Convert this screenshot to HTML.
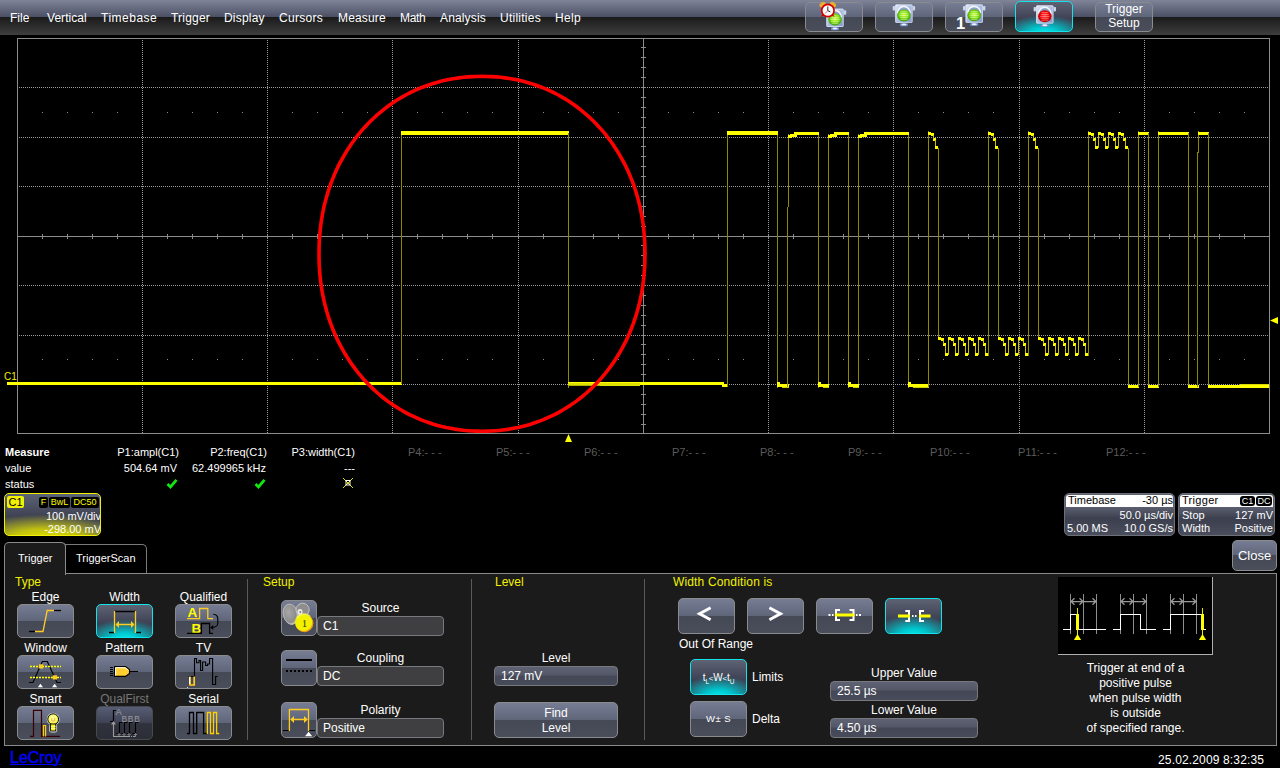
<!DOCTYPE html><html><head><meta charset="utf-8"><title>LeCroy</title>
<style>

html,body{margin:0;padding:0;background:#000;}
body{width:1280px;height:768px;overflow:hidden;position:relative;font-family:"Liberation Sans",sans-serif;font-size:12px;color:#fff;}
.a{position:absolute;white-space:nowrap;}
.t12{font-size:12px;line-height:14px;}
.t11{font-size:11px;line-height:13px;}
.c{text-align:center;}
.r{text-align:right;}
.y{color:#f2f200;}
.btn{position:absolute;box-sizing:border-box;border:1px solid #8a8b8e;border-radius:5px;
 background:linear-gradient(#767c92 0%,#60667a 49%,#454955 50%,#4a4e5b 100%);}
.btn.sel{border-color:#12e4ec;background:radial-gradient(ellipse 75% 62% at 50% 108%,#00f0f0 0%,#00c4cc 35%,rgba(0,170,180,0) 100%),linear-gradient(#5e6374 0%,#3c4052 60%,#3c4052 100%);}
.btn.dis{border-color:#48494d;background:linear-gradient(#575d74 0%,#3f4355 48%,#30323e 52%,#2b2d37 100%);}
.fld{position:absolute;box-sizing:border-box;border:1px solid #77797f;border-radius:4px;background:#3f3f41;font-size:12px;line-height:19px;padding-left:5px;color:#fff;}
.fld2{position:absolute;box-sizing:border-box;border:1px solid #77797f;border-radius:4px;background:linear-gradient(#5e6272 0%,#535767 45%,#444856 50%,#484c5a 100%);font-size:12px;line-height:19px;padding-left:6px;color:#fff;}
.sep{position:absolute;width:1px;background:#5a5a5a;}
svg{position:absolute;left:0;top:0;overflow:visible;}

</style></head><body>
<div class="a" style="left:0;top:0;width:1280px;height:17px;background:linear-gradient(#7f8498,#4b4f64);"></div>
<div class="a" style="left:0;top:17px;width:1280px;height:18px;background:linear-gradient(#1a1a1a,#3e3e3e);"></div>
<div class="a t12" style="left:10px;top:11px;letter-spacing:0px;">File</div>
<div class="a t12" style="left:47px;top:11px;letter-spacing:0.05px;">Vertical</div>
<div class="a t12" style="left:101px;top:11px;letter-spacing:0.5px;">Timebase</div>
<div class="a t12" style="left:171px;top:11px;letter-spacing:0.2px;">Trigger</div>
<div class="a t12" style="left:224px;top:11px;letter-spacing:0.2px;">Display</div>
<div class="a t12" style="left:279px;top:11px;letter-spacing:0.3px;">Cursors</div>
<div class="a t12" style="left:338px;top:11px;letter-spacing:0.15px;">Measure</div>
<div class="a t12" style="left:400px;top:11px;letter-spacing:-0.3px;">Math</div>
<div class="a t12" style="left:440px;top:11px;letter-spacing:0.15px;">Analysis</div>
<div class="a t12" style="left:500px;top:11px;letter-spacing:0.25px;">Utilities</div>
<div class="a t12" style="left:555px;top:11px;letter-spacing:0.3px;">Help</div>
<div class="btn" style="left:805px;top:2px;width:58px;height:30px;"></div>
<div class="btn" style="left:875px;top:2px;width:58px;height:30px;"></div>
<div class="btn" style="left:945px;top:2px;width:58px;height:30px;"></div>
<div class="btn sel" style="left:1015px;top:1px;width:58px;height:31px;"></div>
<div class="btn" style="left:1095px;top:2px;width:58px;height:30px;"></div>
<div class="a t12 c" style="left:1095px;top:2px;width:58px;line-height:14px;">Trigger<br>Setup</div>
<svg width="1280" height="768" viewBox="0 0 1280 768" shape-rendering="crispEdges">
<rect x="17.5" y="38.5" width="1252" height="395" fill="none" stroke="#8c8c8c" stroke-width="1"/>
<line x1="142.5" y1="40" x2="142.5" y2="433" stroke="#9a9a9a" stroke-width="1" stroke-dasharray="1 1"/>
<line x1="267.5" y1="40" x2="267.5" y2="433" stroke="#9a9a9a" stroke-width="1" stroke-dasharray="1 1"/>
<line x1="392.5" y1="40" x2="392.5" y2="433" stroke="#9a9a9a" stroke-width="1" stroke-dasharray="1 1"/>
<line x1="518.5" y1="40" x2="518.5" y2="433" stroke="#9a9a9a" stroke-width="1" stroke-dasharray="1 1"/>
<line x1="768.5" y1="40" x2="768.5" y2="433" stroke="#9a9a9a" stroke-width="1" stroke-dasharray="1 1"/>
<line x1="893.5" y1="40" x2="893.5" y2="433" stroke="#9a9a9a" stroke-width="1" stroke-dasharray="1 1"/>
<line x1="1019.5" y1="40" x2="1019.5" y2="433" stroke="#9a9a9a" stroke-width="1" stroke-dasharray="1 1"/>
<line x1="1144.5" y1="40" x2="1144.5" y2="433" stroke="#9a9a9a" stroke-width="1" stroke-dasharray="1 1"/>
<line x1="19" y1="87.5" x2="1269" y2="87.5" stroke="#9a9a9a" stroke-width="1" stroke-dasharray="1 1"/>
<line x1="19" y1="137.5" x2="1269" y2="137.5" stroke="#9a9a9a" stroke-width="1" stroke-dasharray="1 1"/>
<line x1="19" y1="186.5" x2="1269" y2="186.5" stroke="#9a9a9a" stroke-width="1" stroke-dasharray="1 1"/>
<line x1="19" y1="285.5" x2="1269" y2="285.5" stroke="#9a9a9a" stroke-width="1" stroke-dasharray="1 1"/>
<line x1="19" y1="335.5" x2="1269" y2="335.5" stroke="#9a9a9a" stroke-width="1" stroke-dasharray="1 1"/>
<line x1="19" y1="384.5" x2="1269" y2="384.5" stroke="#9a9a9a" stroke-width="1" stroke-dasharray="1 1"/>
<line x1="18" y1="236.5" x2="1269" y2="236.5" stroke="#8c8c8c"/>
<line x1="643.5" y1="39" x2="643.5" y2="433" stroke="#8c8c8c"/>
<rect x="42" y="234" width="1" height="5" fill="#8c8c8c"/>
<rect x="42" y="112" width="1" height="1" fill="#8a8a8a"/>
<rect x="42" y="359" width="1" height="1" fill="#8a8a8a"/>
<rect x="67" y="234" width="1" height="5" fill="#8c8c8c"/>
<rect x="67" y="112" width="1" height="1" fill="#8a8a8a"/>
<rect x="67" y="359" width="1" height="1" fill="#8a8a8a"/>
<rect x="92" y="234" width="1" height="5" fill="#8c8c8c"/>
<rect x="92" y="112" width="1" height="1" fill="#8a8a8a"/>
<rect x="92" y="359" width="1" height="1" fill="#8a8a8a"/>
<rect x="117" y="234" width="1" height="5" fill="#8c8c8c"/>
<rect x="117" y="112" width="1" height="1" fill="#8a8a8a"/>
<rect x="117" y="359" width="1" height="1" fill="#8a8a8a"/>
<rect x="142" y="234" width="1" height="5" fill="#8c8c8c"/>
<rect x="167" y="234" width="1" height="5" fill="#8c8c8c"/>
<rect x="167" y="112" width="1" height="1" fill="#8a8a8a"/>
<rect x="167" y="359" width="1" height="1" fill="#8a8a8a"/>
<rect x="192" y="234" width="1" height="5" fill="#8c8c8c"/>
<rect x="192" y="112" width="1" height="1" fill="#8a8a8a"/>
<rect x="192" y="359" width="1" height="1" fill="#8a8a8a"/>
<rect x="217" y="234" width="1" height="5" fill="#8c8c8c"/>
<rect x="217" y="112" width="1" height="1" fill="#8a8a8a"/>
<rect x="217" y="359" width="1" height="1" fill="#8a8a8a"/>
<rect x="242" y="234" width="1" height="5" fill="#8c8c8c"/>
<rect x="242" y="112" width="1" height="1" fill="#8a8a8a"/>
<rect x="242" y="359" width="1" height="1" fill="#8a8a8a"/>
<rect x="267" y="234" width="1" height="5" fill="#8c8c8c"/>
<rect x="292" y="234" width="1" height="5" fill="#8c8c8c"/>
<rect x="292" y="112" width="1" height="1" fill="#8a8a8a"/>
<rect x="292" y="359" width="1" height="1" fill="#8a8a8a"/>
<rect x="317" y="234" width="1" height="5" fill="#8c8c8c"/>
<rect x="317" y="112" width="1" height="1" fill="#8a8a8a"/>
<rect x="317" y="359" width="1" height="1" fill="#8a8a8a"/>
<rect x="342" y="234" width="1" height="5" fill="#8c8c8c"/>
<rect x="342" y="112" width="1" height="1" fill="#8a8a8a"/>
<rect x="342" y="359" width="1" height="1" fill="#8a8a8a"/>
<rect x="367" y="234" width="1" height="5" fill="#8c8c8c"/>
<rect x="367" y="112" width="1" height="1" fill="#8a8a8a"/>
<rect x="367" y="359" width="1" height="1" fill="#8a8a8a"/>
<rect x="392" y="234" width="1" height="5" fill="#8c8c8c"/>
<rect x="417" y="234" width="1" height="5" fill="#8c8c8c"/>
<rect x="417" y="112" width="1" height="1" fill="#8a8a8a"/>
<rect x="417" y="359" width="1" height="1" fill="#8a8a8a"/>
<rect x="442" y="234" width="1" height="5" fill="#8c8c8c"/>
<rect x="442" y="112" width="1" height="1" fill="#8a8a8a"/>
<rect x="442" y="359" width="1" height="1" fill="#8a8a8a"/>
<rect x="467" y="234" width="1" height="5" fill="#8c8c8c"/>
<rect x="467" y="112" width="1" height="1" fill="#8a8a8a"/>
<rect x="467" y="359" width="1" height="1" fill="#8a8a8a"/>
<rect x="492" y="234" width="1" height="5" fill="#8c8c8c"/>
<rect x="492" y="112" width="1" height="1" fill="#8a8a8a"/>
<rect x="492" y="359" width="1" height="1" fill="#8a8a8a"/>
<rect x="518" y="234" width="1" height="5" fill="#8c8c8c"/>
<rect x="543" y="234" width="1" height="5" fill="#8c8c8c"/>
<rect x="543" y="112" width="1" height="1" fill="#8a8a8a"/>
<rect x="543" y="359" width="1" height="1" fill="#8a8a8a"/>
<rect x="568" y="234" width="1" height="5" fill="#8c8c8c"/>
<rect x="568" y="112" width="1" height="1" fill="#8a8a8a"/>
<rect x="568" y="359" width="1" height="1" fill="#8a8a8a"/>
<rect x="593" y="234" width="1" height="5" fill="#8c8c8c"/>
<rect x="593" y="112" width="1" height="1" fill="#8a8a8a"/>
<rect x="593" y="359" width="1" height="1" fill="#8a8a8a"/>
<rect x="618" y="234" width="1" height="5" fill="#8c8c8c"/>
<rect x="618" y="112" width="1" height="1" fill="#8a8a8a"/>
<rect x="618" y="359" width="1" height="1" fill="#8a8a8a"/>
<rect x="643" y="234" width="1" height="5" fill="#8c8c8c"/>
<rect x="668" y="234" width="1" height="5" fill="#8c8c8c"/>
<rect x="668" y="112" width="1" height="1" fill="#8a8a8a"/>
<rect x="668" y="359" width="1" height="1" fill="#8a8a8a"/>
<rect x="693" y="234" width="1" height="5" fill="#8c8c8c"/>
<rect x="693" y="112" width="1" height="1" fill="#8a8a8a"/>
<rect x="693" y="359" width="1" height="1" fill="#8a8a8a"/>
<rect x="718" y="234" width="1" height="5" fill="#8c8c8c"/>
<rect x="718" y="112" width="1" height="1" fill="#8a8a8a"/>
<rect x="718" y="359" width="1" height="1" fill="#8a8a8a"/>
<rect x="743" y="234" width="1" height="5" fill="#8c8c8c"/>
<rect x="743" y="112" width="1" height="1" fill="#8a8a8a"/>
<rect x="743" y="359" width="1" height="1" fill="#8a8a8a"/>
<rect x="768" y="234" width="1" height="5" fill="#8c8c8c"/>
<rect x="793" y="234" width="1" height="5" fill="#8c8c8c"/>
<rect x="793" y="112" width="1" height="1" fill="#8a8a8a"/>
<rect x="793" y="359" width="1" height="1" fill="#8a8a8a"/>
<rect x="818" y="234" width="1" height="5" fill="#8c8c8c"/>
<rect x="818" y="112" width="1" height="1" fill="#8a8a8a"/>
<rect x="818" y="359" width="1" height="1" fill="#8a8a8a"/>
<rect x="843" y="234" width="1" height="5" fill="#8c8c8c"/>
<rect x="843" y="112" width="1" height="1" fill="#8a8a8a"/>
<rect x="843" y="359" width="1" height="1" fill="#8a8a8a"/>
<rect x="868" y="234" width="1" height="5" fill="#8c8c8c"/>
<rect x="868" y="112" width="1" height="1" fill="#8a8a8a"/>
<rect x="868" y="359" width="1" height="1" fill="#8a8a8a"/>
<rect x="893" y="234" width="1" height="5" fill="#8c8c8c"/>
<rect x="918" y="234" width="1" height="5" fill="#8c8c8c"/>
<rect x="918" y="112" width="1" height="1" fill="#8a8a8a"/>
<rect x="918" y="359" width="1" height="1" fill="#8a8a8a"/>
<rect x="943" y="234" width="1" height="5" fill="#8c8c8c"/>
<rect x="943" y="112" width="1" height="1" fill="#8a8a8a"/>
<rect x="943" y="359" width="1" height="1" fill="#8a8a8a"/>
<rect x="968" y="234" width="1" height="5" fill="#8c8c8c"/>
<rect x="968" y="112" width="1" height="1" fill="#8a8a8a"/>
<rect x="968" y="359" width="1" height="1" fill="#8a8a8a"/>
<rect x="993" y="234" width="1" height="5" fill="#8c8c8c"/>
<rect x="993" y="112" width="1" height="1" fill="#8a8a8a"/>
<rect x="993" y="359" width="1" height="1" fill="#8a8a8a"/>
<rect x="1019" y="234" width="1" height="5" fill="#8c8c8c"/>
<rect x="1044" y="234" width="1" height="5" fill="#8c8c8c"/>
<rect x="1044" y="112" width="1" height="1" fill="#8a8a8a"/>
<rect x="1044" y="359" width="1" height="1" fill="#8a8a8a"/>
<rect x="1069" y="234" width="1" height="5" fill="#8c8c8c"/>
<rect x="1069" y="112" width="1" height="1" fill="#8a8a8a"/>
<rect x="1069" y="359" width="1" height="1" fill="#8a8a8a"/>
<rect x="1094" y="234" width="1" height="5" fill="#8c8c8c"/>
<rect x="1094" y="112" width="1" height="1" fill="#8a8a8a"/>
<rect x="1094" y="359" width="1" height="1" fill="#8a8a8a"/>
<rect x="1119" y="234" width="1" height="5" fill="#8c8c8c"/>
<rect x="1119" y="112" width="1" height="1" fill="#8a8a8a"/>
<rect x="1119" y="359" width="1" height="1" fill="#8a8a8a"/>
<rect x="1144" y="234" width="1" height="5" fill="#8c8c8c"/>
<rect x="1169" y="234" width="1" height="5" fill="#8c8c8c"/>
<rect x="1169" y="112" width="1" height="1" fill="#8a8a8a"/>
<rect x="1169" y="359" width="1" height="1" fill="#8a8a8a"/>
<rect x="1194" y="234" width="1" height="5" fill="#8c8c8c"/>
<rect x="1194" y="112" width="1" height="1" fill="#8a8a8a"/>
<rect x="1194" y="359" width="1" height="1" fill="#8a8a8a"/>
<rect x="1219" y="234" width="1" height="5" fill="#8c8c8c"/>
<rect x="1219" y="112" width="1" height="1" fill="#8a8a8a"/>
<rect x="1219" y="359" width="1" height="1" fill="#8a8a8a"/>
<rect x="1244" y="234" width="1" height="5" fill="#8c8c8c"/>
<rect x="1244" y="112" width="1" height="1" fill="#8a8a8a"/>
<rect x="1244" y="359" width="1" height="1" fill="#8a8a8a"/>
<rect x="641" y="47" width="5" height="1" fill="#8c8c8c"/>
<rect x="641" y="57" width="5" height="1" fill="#8c8c8c"/>
<rect x="641" y="67" width="5" height="1" fill="#8c8c8c"/>
<rect x="641" y="77" width="5" height="1" fill="#8c8c8c"/>
<rect x="641" y="87" width="5" height="1" fill="#8c8c8c"/>
<rect x="641" y="97" width="5" height="1" fill="#8c8c8c"/>
<rect x="641" y="107" width="5" height="1" fill="#8c8c8c"/>
<rect x="641" y="117" width="5" height="1" fill="#8c8c8c"/>
<rect x="641" y="127" width="5" height="1" fill="#8c8c8c"/>
<rect x="641" y="137" width="5" height="1" fill="#8c8c8c"/>
<rect x="641" y="146" width="5" height="1" fill="#8c8c8c"/>
<rect x="641" y="156" width="5" height="1" fill="#8c8c8c"/>
<rect x="641" y="166" width="5" height="1" fill="#8c8c8c"/>
<rect x="641" y="176" width="5" height="1" fill="#8c8c8c"/>
<rect x="641" y="186" width="5" height="1" fill="#8c8c8c"/>
<rect x="641" y="196" width="5" height="1" fill="#8c8c8c"/>
<rect x="641" y="206" width="5" height="1" fill="#8c8c8c"/>
<rect x="641" y="216" width="5" height="1" fill="#8c8c8c"/>
<rect x="641" y="226" width="5" height="1" fill="#8c8c8c"/>
<rect x="641" y="236" width="5" height="1" fill="#8c8c8c"/>
<rect x="641" y="245" width="5" height="1" fill="#8c8c8c"/>
<rect x="641" y="255" width="5" height="1" fill="#8c8c8c"/>
<rect x="641" y="265" width="5" height="1" fill="#8c8c8c"/>
<rect x="641" y="275" width="5" height="1" fill="#8c8c8c"/>
<rect x="641" y="285" width="5" height="1" fill="#8c8c8c"/>
<rect x="641" y="295" width="5" height="1" fill="#8c8c8c"/>
<rect x="641" y="305" width="5" height="1" fill="#8c8c8c"/>
<rect x="641" y="315" width="5" height="1" fill="#8c8c8c"/>
<rect x="641" y="325" width="5" height="1" fill="#8c8c8c"/>
<rect x="641" y="335" width="5" height="1" fill="#8c8c8c"/>
<rect x="641" y="344" width="5" height="1" fill="#8c8c8c"/>
<rect x="641" y="354" width="5" height="1" fill="#8c8c8c"/>
<rect x="641" y="364" width="5" height="1" fill="#8c8c8c"/>
<rect x="641" y="374" width="5" height="1" fill="#8c8c8c"/>
<rect x="641" y="384" width="5" height="1" fill="#8c8c8c"/>
<rect x="641" y="394" width="5" height="1" fill="#8c8c8c"/>
<rect x="641" y="404" width="5" height="1" fill="#8c8c8c"/>
<rect x="641" y="414" width="5" height="1" fill="#8c8c8c"/>
<rect x="641" y="424" width="5" height="1" fill="#8c8c8c"/>
<rect x="7" y="382" width="395" height="3" fill="#ffff00"/>
<rect x="401" y="131" width="1" height="253" fill="#8f8800"/>
<rect x="401" y="131" width="168" height="4" fill="#ffff00"/>
<rect x="568" y="133" width="1" height="255" fill="#8f8800"/>
<rect x="568" y="382" width="156" height="3" fill="#ffff00"/>
<rect x="568" y="383" width="72" height="3" fill="#e0e000"/>
<rect x="568" y="385" width="32" height="1" fill="#b0b000"/>
<rect x="722" y="384" width="6" height="3" fill="#ffff00"/>
<rect x="727" y="131" width="1" height="256" fill="#8f8800"/>
<rect x="777" y="133" width="1" height="255" fill="#8f8800"/>
<rect x="727" y="131" width="51" height="4" fill="#ffff00"/>
<rect x="788" y="134" width="1" height="73" fill="#8f8800"/>
<rect x="818" y="133" width="1" height="255" fill="#8f8800"/>
<rect x="788" y="135" width="4" height="3" fill="#ffff00"/>
<rect x="790" y="134" width="7" height="3" fill="#ffff00"/>
<rect x="794" y="132" width="25" height="3" fill="#ffff00"/>
<rect x="828" y="134" width="1" height="253" fill="#8f8800"/>
<rect x="848" y="133" width="1" height="255" fill="#8f8800"/>
<rect x="828" y="135" width="4" height="3" fill="#ffff00"/>
<rect x="830" y="134" width="7" height="3" fill="#ffff00"/>
<rect x="834" y="132" width="15" height="3" fill="#ffff00"/>
<rect x="858" y="134" width="1" height="253" fill="#8f8800"/>
<rect x="908" y="133" width="1" height="255" fill="#8f8800"/>
<rect x="858" y="135" width="4" height="3" fill="#ffff00"/>
<rect x="860" y="134" width="7" height="3" fill="#ffff00"/>
<rect x="864" y="132" width="45" height="3" fill="#ffff00"/>
<rect x="777" y="384" width="12" height="3" fill="#ffff00"/>
<rect x="777" y="382" width="3" height="2" fill="#ffff00"/>
<rect x="782" y="387" width="7" height="1" fill="#d0d000"/>
<rect x="818" y="384" width="11" height="3" fill="#ffff00"/>
<rect x="818" y="382" width="3" height="2" fill="#ffff00"/>
<rect x="823" y="387" width="6" height="1" fill="#d0d000"/>
<rect x="848" y="384" width="11" height="3" fill="#ffff00"/>
<rect x="848" y="382" width="3" height="2" fill="#ffff00"/>
<rect x="853" y="387" width="6" height="1" fill="#d0d000"/>
<rect x="908" y="384" width="21" height="3" fill="#ffff00"/>
<rect x="908" y="382" width="3" height="2" fill="#ffff00"/>
<rect x="913" y="387" width="16" height="1" fill="#d0d000"/>
<rect x="787" y="207" width="1" height="180" fill="#8f8800"/>
<rect x="928" y="131" width="1" height="256" fill="#8f8800"/>
<rect x="928" y="132" width="3" height="3" fill="#ffff00"/>
<rect x="931" y="133" width="3" height="3" fill="#ffff00"/>
<rect x="933" y="138" width="3" height="3" fill="#ffff00"/>
<rect x="933" y="135" width="1" height="4" fill="#c8c000"/>
<rect x="935" y="140" width="1" height="7" fill="#c8c000"/>
<rect x="935" y="146" width="3" height="3" fill="#ffff00"/>
<rect x="938" y="148" width="1" height="190" fill="#8f8800"/>
<rect x="938" y="337" width="3" height="3" fill="#ffff00"/>
<rect x="941" y="338" width="3" height="3" fill="#ffff00"/>
<rect x="943" y="343" width="3" height="3" fill="#ffff00"/>
<rect x="943" y="340" width="1" height="4" fill="#c8c000"/>
<rect x="945" y="345" width="1" height="9" fill="#c8c000"/>
<rect x="945" y="353" width="3" height="3" fill="#ffff00"/>
<rect x="948" y="337" width="1" height="18" fill="#c8c000"/>
<rect x="948" y="337" width="3" height="3" fill="#ffff00"/>
<rect x="951" y="338" width="3" height="3" fill="#ffff00"/>
<rect x="953" y="343" width="3" height="3" fill="#ffff00"/>
<rect x="953" y="340" width="1" height="4" fill="#c8c000"/>
<rect x="955" y="345" width="1" height="9" fill="#c8c000"/>
<rect x="955" y="353" width="3" height="3" fill="#ffff00"/>
<rect x="958" y="337" width="1" height="18" fill="#c8c000"/>
<rect x="958" y="337" width="3" height="3" fill="#ffff00"/>
<rect x="961" y="338" width="3" height="3" fill="#ffff00"/>
<rect x="963" y="343" width="3" height="3" fill="#ffff00"/>
<rect x="963" y="340" width="1" height="4" fill="#c8c000"/>
<rect x="965" y="345" width="1" height="9" fill="#c8c000"/>
<rect x="965" y="353" width="3" height="3" fill="#ffff00"/>
<rect x="968" y="337" width="1" height="18" fill="#c8c000"/>
<rect x="968" y="337" width="3" height="3" fill="#ffff00"/>
<rect x="971" y="338" width="3" height="3" fill="#ffff00"/>
<rect x="973" y="343" width="3" height="3" fill="#ffff00"/>
<rect x="973" y="340" width="1" height="4" fill="#c8c000"/>
<rect x="975" y="345" width="1" height="9" fill="#c8c000"/>
<rect x="975" y="353" width="3" height="3" fill="#ffff00"/>
<rect x="978" y="337" width="1" height="18" fill="#c8c000"/>
<rect x="978" y="337" width="3" height="3" fill="#ffff00"/>
<rect x="981" y="338" width="3" height="3" fill="#ffff00"/>
<rect x="983" y="343" width="3" height="3" fill="#ffff00"/>
<rect x="983" y="340" width="1" height="4" fill="#c8c000"/>
<rect x="985" y="345" width="1" height="9" fill="#c8c000"/>
<rect x="985" y="353" width="3" height="3" fill="#ffff00"/>
<rect x="988" y="131" width="1" height="225" fill="#8f8800"/>
<rect x="988" y="132" width="3" height="3" fill="#ffff00"/>
<rect x="991" y="133" width="3" height="3" fill="#ffff00"/>
<rect x="993" y="138" width="3" height="3" fill="#ffff00"/>
<rect x="993" y="135" width="1" height="4" fill="#c8c000"/>
<rect x="995" y="140" width="1" height="7" fill="#c8c000"/>
<rect x="995" y="146" width="3" height="3" fill="#ffff00"/>
<rect x="998" y="148" width="1" height="190" fill="#8f8800"/>
<rect x="998" y="337" width="3" height="3" fill="#ffff00"/>
<rect x="1001" y="338" width="3" height="3" fill="#ffff00"/>
<rect x="1003" y="343" width="3" height="3" fill="#ffff00"/>
<rect x="1003" y="340" width="1" height="4" fill="#c8c000"/>
<rect x="1005" y="345" width="1" height="9" fill="#c8c000"/>
<rect x="1005" y="353" width="3" height="3" fill="#ffff00"/>
<rect x="1008" y="337" width="1" height="18" fill="#c8c000"/>
<rect x="1008" y="337" width="3" height="3" fill="#ffff00"/>
<rect x="1011" y="338" width="3" height="3" fill="#ffff00"/>
<rect x="1013" y="343" width="3" height="3" fill="#ffff00"/>
<rect x="1013" y="340" width="1" height="4" fill="#c8c000"/>
<rect x="1015" y="345" width="1" height="9" fill="#c8c000"/>
<rect x="1015" y="353" width="3" height="3" fill="#ffff00"/>
<rect x="1018" y="337" width="1" height="18" fill="#c8c000"/>
<rect x="1018" y="337" width="3" height="3" fill="#ffff00"/>
<rect x="1021" y="338" width="3" height="3" fill="#ffff00"/>
<rect x="1023" y="343" width="3" height="3" fill="#ffff00"/>
<rect x="1023" y="340" width="1" height="4" fill="#c8c000"/>
<rect x="1025" y="345" width="1" height="9" fill="#c8c000"/>
<rect x="1025" y="353" width="3" height="3" fill="#ffff00"/>
<rect x="1028" y="131" width="1" height="225" fill="#8f8800"/>
<rect x="1028" y="132" width="3" height="3" fill="#ffff00"/>
<rect x="1031" y="133" width="3" height="3" fill="#ffff00"/>
<rect x="1033" y="138" width="3" height="3" fill="#ffff00"/>
<rect x="1033" y="135" width="1" height="4" fill="#c8c000"/>
<rect x="1035" y="140" width="1" height="7" fill="#c8c000"/>
<rect x="1035" y="146" width="3" height="3" fill="#ffff00"/>
<rect x="1038" y="148" width="1" height="190" fill="#8f8800"/>
<rect x="1038" y="337" width="3" height="3" fill="#ffff00"/>
<rect x="1041" y="338" width="3" height="3" fill="#ffff00"/>
<rect x="1043" y="343" width="3" height="3" fill="#ffff00"/>
<rect x="1043" y="340" width="1" height="4" fill="#c8c000"/>
<rect x="1045" y="345" width="1" height="9" fill="#c8c000"/>
<rect x="1045" y="353" width="3" height="3" fill="#ffff00"/>
<rect x="1048" y="337" width="1" height="18" fill="#c8c000"/>
<rect x="1048" y="337" width="3" height="3" fill="#ffff00"/>
<rect x="1051" y="338" width="3" height="3" fill="#ffff00"/>
<rect x="1053" y="343" width="3" height="3" fill="#ffff00"/>
<rect x="1053" y="340" width="1" height="4" fill="#c8c000"/>
<rect x="1055" y="345" width="1" height="9" fill="#c8c000"/>
<rect x="1055" y="353" width="3" height="3" fill="#ffff00"/>
<rect x="1058" y="337" width="1" height="18" fill="#c8c000"/>
<rect x="1058" y="337" width="3" height="3" fill="#ffff00"/>
<rect x="1061" y="338" width="3" height="3" fill="#ffff00"/>
<rect x="1063" y="343" width="3" height="3" fill="#ffff00"/>
<rect x="1063" y="340" width="1" height="4" fill="#c8c000"/>
<rect x="1065" y="345" width="1" height="9" fill="#c8c000"/>
<rect x="1065" y="353" width="3" height="3" fill="#ffff00"/>
<rect x="1068" y="337" width="1" height="18" fill="#c8c000"/>
<rect x="1068" y="337" width="3" height="3" fill="#ffff00"/>
<rect x="1071" y="338" width="3" height="3" fill="#ffff00"/>
<rect x="1073" y="343" width="3" height="3" fill="#ffff00"/>
<rect x="1073" y="340" width="1" height="4" fill="#c8c000"/>
<rect x="1075" y="345" width="1" height="9" fill="#c8c000"/>
<rect x="1075" y="353" width="3" height="3" fill="#ffff00"/>
<rect x="1078" y="337" width="1" height="18" fill="#c8c000"/>
<rect x="1078" y="337" width="3" height="3" fill="#ffff00"/>
<rect x="1081" y="338" width="3" height="3" fill="#ffff00"/>
<rect x="1083" y="343" width="3" height="3" fill="#ffff00"/>
<rect x="1083" y="340" width="1" height="4" fill="#c8c000"/>
<rect x="1085" y="345" width="1" height="9" fill="#c8c000"/>
<rect x="1085" y="353" width="3" height="3" fill="#ffff00"/>
<rect x="1088" y="131" width="1" height="225" fill="#8f8800"/>
<rect x="1088" y="132" width="3" height="3" fill="#ffff00"/>
<rect x="1091" y="133" width="3" height="3" fill="#ffff00"/>
<rect x="1093" y="138" width="3" height="3" fill="#ffff00"/>
<rect x="1093" y="135" width="1" height="4" fill="#c8c000"/>
<rect x="1095" y="140" width="1" height="7" fill="#c8c000"/>
<rect x="1095" y="146" width="3" height="3" fill="#ffff00"/>
<rect x="1098" y="132" width="1" height="16" fill="#c8c000"/>
<rect x="1098" y="132" width="3" height="3" fill="#ffff00"/>
<rect x="1101" y="133" width="3" height="3" fill="#ffff00"/>
<rect x="1103" y="138" width="3" height="3" fill="#ffff00"/>
<rect x="1103" y="135" width="1" height="4" fill="#c8c000"/>
<rect x="1105" y="140" width="1" height="7" fill="#c8c000"/>
<rect x="1105" y="146" width="3" height="3" fill="#ffff00"/>
<rect x="1108" y="132" width="1" height="16" fill="#c8c000"/>
<rect x="1108" y="132" width="3" height="3" fill="#ffff00"/>
<rect x="1111" y="133" width="3" height="3" fill="#ffff00"/>
<rect x="1113" y="138" width="3" height="3" fill="#ffff00"/>
<rect x="1113" y="135" width="1" height="4" fill="#c8c000"/>
<rect x="1115" y="140" width="1" height="7" fill="#c8c000"/>
<rect x="1115" y="146" width="3" height="3" fill="#ffff00"/>
<rect x="1118" y="132" width="1" height="16" fill="#c8c000"/>
<rect x="1118" y="132" width="3" height="3" fill="#ffff00"/>
<rect x="1121" y="133" width="3" height="3" fill="#ffff00"/>
<rect x="1123" y="138" width="3" height="3" fill="#ffff00"/>
<rect x="1123" y="135" width="1" height="4" fill="#c8c000"/>
<rect x="1125" y="140" width="1" height="7" fill="#c8c000"/>
<rect x="1125" y="146" width="3" height="3" fill="#ffff00"/>
<rect x="1128" y="148" width="1" height="240" fill="#8f8800"/>
<rect x="1128" y="385" width="11" height="3" fill="#ffff00"/>
<rect x="1138" y="131" width="1" height="256" fill="#8f8800"/>
<rect x="1138" y="132" width="11" height="3" fill="#ffff00"/>
<rect x="1148" y="133" width="1" height="255" fill="#8f8800"/>
<rect x="1148" y="385" width="11" height="3" fill="#ffff00"/>
<rect x="1158" y="131" width="1" height="256" fill="#8f8800"/>
<rect x="1158" y="132" width="31" height="3" fill="#ffff00"/>
<rect x="1188" y="133" width="1" height="255" fill="#8f8800"/>
<rect x="1188" y="385" width="11" height="3" fill="#ffff00"/>
<rect x="1198" y="131" width="1" height="22" fill="#8f8800"/>
<rect x="1198" y="132" width="11" height="3" fill="#ffff00"/>
<rect x="1208" y="133" width="1" height="255" fill="#8f8800"/>
<rect x="1197" y="152" width="1" height="235" fill="#8f8800"/>
<rect x="1208" y="385" width="61" height="3" fill="#ffff00"/>
<rect x="1240" y="384" width="29" height="1" fill="#d8d800"/>
<polygon points="645.0,253.8 644.9,259.1 644.8,264.2 644.5,269.2 644.1,274.0 643.7,278.8 643.1,283.6 642.4,288.3 641.6,293.0 640.7,297.6 639.7,302.2 638.5,306.7 637.3,311.2 636.0,315.6 634.6,319.9 633.1,324.2 631.4,328.5 629.7,332.7 627.9,336.8 626.0,340.9 623.9,344.9 621.8,348.8 619.6,352.7 617.3,356.5 614.9,360.2 612.5,363.9 609.9,367.4 607.3,370.9 604.5,374.4 601.7,377.7 598.8,380.9 595.8,384.1 592.8,387.1 589.6,390.1 586.4,393.0 583.1,395.8 579.8,398.5 576.4,401.1 572.9,403.6 569.3,406.0 565.7,408.3 562.0,410.5 558.3,412.6 554.5,414.6 550.6,416.4 546.7,418.2 542.8,419.9 538.8,421.4 534.7,422.8 530.6,424.2 526.4,425.4 522.2,426.5 518.0,427.5 513.7,428.3 509.4,429.1 505.0,429.7 500.6,430.3 496.1,430.7 491.6,431.0 486.9,431.1 482.0,431.2 477.1,431.1 472.4,431.0 467.9,430.7 463.4,430.3 459.0,429.7 454.6,429.1 450.3,428.3 446.0,427.5 441.8,426.5 437.6,425.4 433.4,424.2 429.3,422.8 425.2,421.4 421.2,419.9 417.3,418.2 413.4,416.4 409.5,414.6 405.7,412.6 402.0,410.5 398.3,408.3 394.7,406.0 391.1,403.6 387.6,401.1 384.2,398.5 380.9,395.8 377.6,393.0 374.4,390.1 371.2,387.1 368.2,384.1 365.2,380.9 362.3,377.7 359.5,374.4 356.7,370.9 354.1,367.4 351.5,363.9 349.1,360.2 346.7,356.5 344.4,352.7 342.2,348.8 340.1,344.9 338.0,340.9 336.1,336.8 334.3,332.7 332.6,328.5 330.9,324.2 329.4,319.9 328.0,315.6 326.7,311.2 325.5,306.7 324.3,302.2 323.3,297.6 322.4,293.0 321.6,288.3 320.9,283.6 320.3,278.8 319.9,274.0 319.5,269.2 319.2,264.2 319.1,259.1 319.0,253.8 319.1,248.5 319.2,243.4 319.5,238.4 319.9,233.6 320.3,228.8 320.9,224.0 321.6,219.3 322.4,214.6 323.3,210.0 324.3,205.4 325.5,200.9 326.7,196.4 328.0,192.0 329.4,187.7 330.9,183.4 332.6,179.1 334.3,174.9 336.1,170.8 338.0,166.7 340.1,162.7 342.2,158.8 344.4,154.9 346.7,151.1 349.1,147.4 351.5,143.7 354.1,140.2 356.7,136.7 359.5,133.2 362.3,129.9 365.2,126.7 368.2,123.5 371.2,120.5 374.4,117.5 377.6,114.6 380.9,111.8 384.2,109.1 387.6,106.5 391.1,104.0 394.7,101.6 398.3,99.3 402.0,97.1 405.7,95.0 409.5,93.0 413.4,91.2 417.3,89.4 421.2,87.7 425.2,86.2 429.3,84.8 433.4,83.4 437.6,82.2 441.8,81.1 446.0,80.1 450.3,79.3 454.6,78.5 459.0,77.9 463.4,77.3 467.9,76.9 472.4,76.6 477.1,76.5 482.0,76.4 486.9,76.5 491.6,76.6 496.1,76.9 500.6,77.3 505.0,77.9 509.4,78.5 513.7,79.3 518.0,80.1 522.2,81.1 526.4,82.2 530.6,83.4 534.7,84.8 538.8,86.2 542.8,87.7 546.7,89.4 550.6,91.2 554.5,93.0 558.3,95.0 562.0,97.1 565.7,99.3 569.3,101.6 572.9,104.0 576.4,106.5 579.8,109.1 583.1,111.8 586.4,114.6 589.6,117.5 592.8,120.5 595.8,123.5 598.8,126.7 601.7,129.9 604.5,133.2 607.3,136.7 609.9,140.2 612.5,143.7 614.9,147.4 617.3,151.1 619.6,154.9 621.8,158.8 623.9,162.7 626.0,166.7 627.9,170.8 629.7,174.9 631.4,179.1 633.1,183.4 634.6,187.7 636.0,192.0 637.3,196.4 638.5,200.9 639.7,205.4 640.7,210.0 641.6,214.6 642.4,219.3 643.1,224.0 643.7,228.8 644.1,233.6 644.5,238.4 644.8,243.4 644.9,248.5" fill="none" stroke="#ff0000" stroke-width="3.6" stroke-linejoin="round" shape-rendering="auto"/>
<polygon points="565,442 572,442 568.5,434" fill="#ffff00" shape-rendering="auto"/>
<polygon points="1270,320.5 1278,317 1278,324" fill="#ffff00" shape-rendering="auto"/>
<text x="4" y="380" font-family='"Liberation Sans", sans-serif' font-size="10" fill="#f0f000" shape-rendering="auto">C1</text>
</svg>
<div class="a t11" style="left:5px;top:446px;font-weight:bold;">Measure</div>
<div class="a t11" style="left:5px;top:462px;">value</div>
<div class="a t11" style="left:5px;top:478px;">status</div>
<div class="a t11 r" style="left:80px;top:446px;width:99px;">P1:ampl(C1)</div>
<div class="a t11 r" style="left:80px;top:462px;width:97px;">504.64 mV</div>
<div class="a t11 r" style="left:170px;top:446px;width:97px;">P2:freq(C1)</div>
<div class="a t11 r" style="left:166px;top:462px;width:100px;">62.499965 kHz</div>
<div class="a t11 r" style="left:260px;top:446px;width:95px;">P3:width(C1)</div>
<div class="a t11 r" style="left:260px;top:462px;width:95px;">---</div>
<div class="a t11" style="left:408px;top:446px;color:#5c5c5c;">P4:- - -</div>
<div class="a t11" style="left:496px;top:446px;color:#5c5c5c;">P5:- - -</div>
<div class="a t11" style="left:584px;top:446px;color:#5c5c5c;">P6:- - -</div>
<div class="a t11" style="left:672px;top:446px;color:#5c5c5c;">P7:- - -</div>
<div class="a t11" style="left:760px;top:446px;color:#5c5c5c;">P8:- - -</div>
<div class="a t11" style="left:848px;top:446px;color:#5c5c5c;">P9:- - -</div>
<div class="a t11" style="left:930px;top:446px;color:#5c5c5c;">P10:- - -</div>
<div class="a t11" style="left:1018px;top:446px;color:#5c5c5c;">P11:- - -</div>
<div class="a t11" style="left:1106px;top:446px;color:#5c5c5c;">P12:- - -</div>
<svg width="1280" height="768" viewBox="0 0 1280 768"><path d="M167.5 484 L170.5 487 L176.5 479.8" stroke="#10e810" stroke-width="2.8" fill="none"/></svg>
<svg width="1280" height="768" viewBox="0 0 1280 768"><path d="M255.5 484 L258.5 487 L264.5 479.8" stroke="#10e810" stroke-width="2.8" fill="none"/></svg>
<svg width="1280" height="768" viewBox="0 0 1280 768"><g stroke-width="1" fill="none"><path d="M343 478 L353 488 M353 478 L343 488" stroke="#e4e400"/><rect x="346" y="480.5" width="4" height="4.5" stroke="#ffffff"/></g></svg>
<div class="a" style="left:4px;top:493px;width:97px;height:43px;box-sizing:border-box;border:1px solid #f0f000;border-radius:5px;overflow:hidden;background:radial-gradient(ellipse 90% 62% at 42% 112%,#e8e800 0%,#c2c210 42%,rgba(110,110,50,0) 100%),linear-gradient(#5c6276 0%,#3e4252 55%,#474b58 100%);"><div class="a" style="left:2px;top:2px;width:17px;height:12px;background:#f2f200;border-radius:2px;color:#000;font-size:11px;line-height:12px;text-align:center;">C1</div><div class="a" style="left:34px;top:3px;width:9px;height:11px;background:#000;border-radius:2px;color:#ffff00;font-size:9px;line-height:11px;text-align:center;">F</div><div class="a" style="left:44px;top:3px;width:21px;height:11px;background:#000;border-radius:2px;color:#ffff00;font-size:9px;line-height:11px;text-align:center;">BwL</div><div class="a" style="left:66px;top:3px;width:28px;height:11px;background:#000;border-radius:2px;color:#ffff00;font-size:9px;line-height:11px;text-align:center;">DC50</div><div class="a t11 r" style="left:0;top:16px;width:96px;">100 mV/div</div><div class="a t11 r" style="left:0;top:29px;width:96px;">-298.00 mV</div></div>
<div class="a" style="left:1064px;top:493px;width:111px;height:43px;box-sizing:border-box;border:1px solid #6e7078;border-radius:5px;overflow:hidden;background:linear-gradient(#5a5e6e 0%,#5a5e6e 32%,#3c404e 60%,#4a4e5c 100%);"><div class="a" style="left:1px;top:1px;width:107px;height:12px;background:#fff;border-radius:3px 3px 0 0;"></div><div class="a t11" style="left:3px;top:0px;color:#000;">Timebase</div><div class="a t11 r" style="left:0;top:0px;width:108px;color:#000;">-30 µs</div><div class="a t11 r" style="left:0;top:15px;width:108px;">50.0 µs/div</div><div class="a t11" style="left:2px;top:28px;">5.00 MS</div><div class="a t11 r" style="left:0;top:28px;width:108px;">10.0 GS/s</div></div>
<div class="a" style="left:1178px;top:493px;width:97px;height:43px;box-sizing:border-box;border:1px solid #6e7078;border-radius:5px;overflow:hidden;background:linear-gradient(#5a5e6e 0%,#5a5e6e 32%,#3c404e 60%,#4a4e5c 100%);"><div class="a" style="left:1px;top:1px;width:93px;height:12px;background:#fff;border-radius:3px 3px 0 0;"></div><div class="a t11" style="left:3px;top:0px;color:#000;letter-spacing:0.3px;">Trigger</div><div class="a" style="left:61px;top:2px;width:15px;height:10px;background:#000;border-radius:3px;color:#fff;font-size:9px;line-height:10px;text-align:center;">C1</div><div class="a" style="left:77px;top:2px;width:16px;height:10px;background:#000;border-radius:3px;color:#fff;font-size:9px;line-height:10px;text-align:center;">DC</div><div class="a t11" style="left:3px;top:15px;">Stop</div><div class="a t11 r" style="left:0;top:15px;width:94px;">127 mV</div><div class="a t11" style="left:3px;top:28px;">Width</div><div class="a t11 r" style="left:0;top:28px;width:94px;">Positive</div></div>
<div class="btn" style="left:1232px;top:540px;width:45px;height:31px;"></div>
<div class="a t12 c" style="left:1232px;top:549px;width:45px;font-size:13px;">Close</div>
<div class="a" style="left:4px;top:573px;width:1273px;height:173px;box-sizing:border-box;border:1px solid #8a8a8a;background:#1b1b1b;"></div>
<div class="a" style="left:65px;top:544px;width:82px;height:29px;box-sizing:border-box;border:1px solid #7a7a7a;border-bottom:none;border-radius:0 5px 0 0;background:#000;"></div>
<div class="a" style="left:4px;top:542px;width:62px;height:33px;box-sizing:border-box;border:1px solid #8a8a8a;border-bottom:none;border-radius:5px 5px 0 0;background:#1b1b1b;"></div>
<div class="a t11" style="left:18px;top:552px;">Trigger</div>
<div class="a t11" style="left:76px;top:552px;">TriggerScan</div>
<div class="a t12 y" style="left:15px;top:575px;">Type</div>
<div class="a t12 y" style="left:263px;top:575px;">Setup</div>
<div class="a t12 y" style="left:495px;top:575px;">Level</div>
<div class="a t12 y" style="left:673px;top:575px;letter-spacing:0.15px;">Width Condition is</div>
<div class="sep" style="left:247px;top:579px;height:161px;"></div>
<div class="sep" style="left:471px;top:579px;height:161px;"></div>
<div class="sep" style="left:644px;top:579px;height:161px;"></div>
<div class="btn " style="left:17px;top:604px;width:57px;height:34px;"></div>
<div class="a t12 c" style="left:7px;top:590px;width:77px;color:#fff;">Edge</div>
<div class="btn sel" style="left:96px;top:604px;width:57px;height:34px;"></div>
<div class="a t12 c" style="left:86px;top:590px;width:77px;color:#fff;">Width</div>
<div class="btn " style="left:175px;top:604px;width:57px;height:34px;"></div>
<div class="a t12 c" style="left:165px;top:590px;width:77px;color:#fff;">Qualified</div>
<div class="btn " style="left:17px;top:655px;width:57px;height:34px;"></div>
<div class="a t12 c" style="left:7px;top:641px;width:77px;color:#fff;">Window</div>
<div class="btn " style="left:96px;top:655px;width:57px;height:34px;"></div>
<div class="a t12 c" style="left:86px;top:641px;width:77px;color:#fff;">Pattern</div>
<div class="btn " style="left:175px;top:655px;width:57px;height:34px;"></div>
<div class="a t12 c" style="left:165px;top:641px;width:77px;color:#fff;">TV</div>
<div class="btn " style="left:17px;top:706px;width:57px;height:34px;"></div>
<div class="a t12 c" style="left:7px;top:692px;width:77px;color:#fff;">Smart</div>
<div class="btn dis" style="left:96px;top:706px;width:57px;height:34px;"></div>
<div class="a t12 c" style="left:86px;top:692px;width:77px;color:#777;">QualFirst</div>
<div class="btn " style="left:175px;top:706px;width:57px;height:34px;"></div>
<div class="a t12 c" style="left:165px;top:692px;width:77px;color:#fff;">Serial</div>
<!--ICONS-->
<div class="btn" style="left:281px;top:600px;width:36px;height:36px;"></div>
<div class="fld" style="left:317px;top:616px;width:127px;height:20px;">C1</div>
<div class="a t12 c" style="left:317px;top:601px;width:127px;">Source</div>
<div class="btn" style="left:281px;top:650px;width:36px;height:36px;"></div>
<div class="fld" style="left:317px;top:666px;width:127px;height:20px;">DC</div>
<div class="a t12 c" style="left:317px;top:651px;width:127px;">Coupling</div>
<div class="btn" style="left:281px;top:702px;width:36px;height:36px;"></div>
<div class="fld" style="left:317px;top:718px;width:127px;height:20px;">Positive</div>
<div class="a t12 c" style="left:317px;top:703px;width:127px;">Polarity</div>
<div class="a t12 c" style="left:494px;top:651px;width:124px;">Level</div>
<div class="fld2" style="left:494px;top:666px;width:124px;height:20px;">127 mV</div>
<div class="btn" style="left:494px;top:702px;width:124px;height:36px;"></div>
<div class="a t12 c" style="left:494px;top:706px;width:124px;line-height:15px;">Find<br>Level</div>
<div class="btn " style="left:678px;top:598px;width:57px;height:36px;"></div>
<div class="btn " style="left:747px;top:598px;width:57px;height:36px;"></div>
<div class="btn " style="left:816px;top:598px;width:57px;height:36px;"></div>
<div class="btn sel" style="left:885px;top:598px;width:57px;height:36px;"></div>
<div class="a t12" style="left:679px;top:637px;">Out Of Range</div>
<div class="btn sel" style="left:690px;top:659px;width:57px;height:36px;"></div>
<div class="btn" style="left:690px;top:701px;width:57px;height:36px;"></div>
<div class="a c" style="left:690px;top:671px;width:57px;font-size:10px;line-height:13px;letter-spacing:-0.2px;">t<span style="font-size:6.5px;vertical-align:-2.5px;">L</span><span style="font-size:8px;">&lt;</span>W<span style="font-size:8px;">&lt;</span>t<span style="font-size:6.5px;vertical-align:-2.5px;">U</span></div>
<div class="a c" style="left:690px;top:712px;width:57px;font-size:9.5px;line-height:13px;letter-spacing:0.4px;">W± S</div>
<div class="a t12" style="left:752px;top:670px;">Limits</div>
<div class="a t12" style="left:752px;top:712px;">Delta</div>
<div class="a t12 c" style="left:830px;top:666px;width:148px;">Upper Value</div>
<div class="fld2" style="left:830px;top:681px;width:148px;height:20px;">25.5 µs</div>
<div class="a t12 c" style="left:830px;top:703px;width:148px;">Lower Value</div>
<div class="fld2" style="left:830px;top:718px;width:148px;height:20px;">4.50 µs</div>
<div class="a" style="left:1058px;top:577px;width:155px;height:78px;box-sizing:border-box;background:#000;border-right:1px solid #b0b0b0;border-bottom:1px solid #b0b0b0;"></div>
<div class="a t12 c" style="left:1058px;top:661px;width:155px;line-height:15px;">Trigger at end of a<br>positive pulse<br>when pulse width<br>is outside<br>of specified range.</div>
<svg width="1280" height="768" viewBox="0 0 1280 768">
<defs><linearGradient id="tl" x1="0" y1="0" x2="1" y2="1"><stop offset="0" stop-color="#dfe8f8"/><stop offset="0.5" stop-color="#a9bce0"/><stop offset="1" stop-color="#7d95c6"/></linearGradient><radialGradient id="gr" cx="0.5" cy="0.45" r="0.55"><stop offset="0" stop-color="#d6ff50"/><stop offset="0.6" stop-color="#7fdc10"/><stop offset="1" stop-color="#3c9a00"/></radialGradient><radialGradient id="rd" cx="0.5" cy="0.45" r="0.55"><stop offset="0" stop-color="#ff4848"/><stop offset="0.6" stop-color="#f40000"/><stop offset="1" stop-color="#b00000"/></radialGradient><radialGradient id="disc" cx="0.4" cy="0.4" r="0.6"><stop offset="0" stop-color="#a8a8a8"/><stop offset="0.8" stop-color="#8c8c8c"/><stop offset="1" stop-color="#c8c8c8"/></radialGradient><radialGradient id="bulb" cx="0.45" cy="0.4" r="0.6"><stop offset="0" stop-color="#ffffb0"/><stop offset="1" stop-color="#f4f430"/></radialGradient></defs>
<rect x="823.8" y="10.2" width="2.4" height="4.5" rx="0.8" fill="#c9d6ee"/><rect x="843.8" y="10.2" width="2.4" height="4.5" rx="0.8" fill="#c9d6ee"/>
<rect x="826.4" y="8.7" width="17.2" height="18.2" rx="0.8" fill="url(#tl)"/>
<rect x="826.8" y="9.1" width="16.4" height="17.4" rx="0.6" fill="none" stroke="#eef3fc" stroke-width="0.8" opacity="0.8"/>
<path d="M828.7 17.2 A6.3 6.6 0 0 1 841.3 17.2" fill="#8ea0c4" stroke="#f4f7fd" stroke-width="1.5"/>
<ellipse cx="835" cy="19.5" rx="6.7" ry="6" fill="url(#gr)"/>
<rect x="831.6" y="15.499999999999996" width="6.799999999999999" height="0.7" fill="#ffffff" opacity="0.5"/>
<rect x="831.0" y="17.4" width="7.999999999999999" height="0.7" fill="#ffffff" opacity="0.5"/>
<rect x="830.4" y="19.299999999999997" width="9.2" height="0.7" fill="#ffffff" opacity="0.5"/>
<rect x="831.0" y="21.199999999999996" width="7.999999999999999" height="0.7" fill="#ffffff" opacity="0.5"/>
<rect x="831.6" y="23.099999999999998" width="6.799999999999999" height="0.7" fill="#ffffff" opacity="0.5"/>
<rect x="831" y="27.3" width="8" height="3" rx="0.8" fill="#6f8ec8"/>
<ellipse cx="835" cy="28.5" rx="2.6" ry="1" fill="#eef2fb"/>
<rect x="892.6999999999999" y="6.1" width="2.4" height="4.5" rx="0.8" fill="#c9d6ee"/><rect x="912.6999999999999" y="6.1" width="2.4" height="4.5" rx="0.8" fill="#c9d6ee"/>
<rect x="895.3" y="4.6" width="17.2" height="18.2" rx="0.8" fill="url(#tl)"/>
<rect x="895.6999999999999" y="5.0" width="16.4" height="17.4" rx="0.6" fill="none" stroke="#eef3fc" stroke-width="0.8" opacity="0.8"/>
<path d="M897.6 13.1 A6.3 6.6 0 0 1 910.1999999999999 13.1" fill="#8ea0c4" stroke="#f4f7fd" stroke-width="1.5"/>
<ellipse cx="903.9" cy="15.4" rx="6.7" ry="6" fill="url(#gr)"/>
<rect x="900.5" y="11.399999999999999" width="6.799999999999999" height="0.7" fill="#ffffff" opacity="0.5"/>
<rect x="899.9" y="13.299999999999999" width="7.999999999999999" height="0.7" fill="#ffffff" opacity="0.5"/>
<rect x="899.3" y="15.2" width="9.2" height="0.7" fill="#ffffff" opacity="0.5"/>
<rect x="899.9" y="17.099999999999998" width="7.999999999999999" height="0.7" fill="#ffffff" opacity="0.5"/>
<rect x="900.5" y="19.0" width="6.799999999999999" height="0.7" fill="#ffffff" opacity="0.5"/>
<rect x="899.9" y="23.200000000000003" width="8" height="3" rx="0.8" fill="#6f8ec8"/>
<ellipse cx="903.9" cy="24.4" rx="2.6" ry="1" fill="#eef2fb"/>
<rect x="963.0" y="6.0" width="2.4" height="4.5" rx="0.8" fill="#c9d6ee"/><rect x="983.0" y="6.0" width="2.4" height="4.5" rx="0.8" fill="#c9d6ee"/>
<rect x="965.6" y="4.5" width="17.2" height="18.2" rx="0.8" fill="url(#tl)"/>
<rect x="966.0" y="4.9" width="16.4" height="17.4" rx="0.6" fill="none" stroke="#eef3fc" stroke-width="0.8" opacity="0.8"/>
<path d="M967.9000000000001 13.0 A6.3 6.6 0 0 1 980.5 13.0" fill="#8ea0c4" stroke="#f4f7fd" stroke-width="1.5"/>
<ellipse cx="974.2" cy="15.3" rx="6.7" ry="6" fill="url(#gr)"/>
<rect x="970.8000000000001" y="11.3" width="6.799999999999999" height="0.7" fill="#ffffff" opacity="0.5"/>
<rect x="970.2" y="13.2" width="7.999999999999999" height="0.7" fill="#ffffff" opacity="0.5"/>
<rect x="969.6" y="15.1" width="9.2" height="0.7" fill="#ffffff" opacity="0.5"/>
<rect x="970.2" y="17.0" width="7.999999999999999" height="0.7" fill="#ffffff" opacity="0.5"/>
<rect x="970.8000000000001" y="18.9" width="6.799999999999999" height="0.7" fill="#ffffff" opacity="0.5"/>
<rect x="970.2" y="23.1" width="8" height="3" rx="0.8" fill="#6f8ec8"/>
<ellipse cx="974.2" cy="24.3" rx="2.6" ry="1" fill="#eef2fb"/>
<rect x="1033.6000000000001" y="6.9" width="2.4" height="4.5" rx="0.8" fill="#c9d6ee"/><rect x="1053.6000000000001" y="6.9" width="2.4" height="4.5" rx="0.8" fill="#c9d6ee"/>
<rect x="1036.2" y="5.4" width="17.2" height="18.2" rx="0.8" fill="url(#tl)"/>
<rect x="1036.6000000000001" y="5.800000000000001" width="16.4" height="17.4" rx="0.6" fill="none" stroke="#eef3fc" stroke-width="0.8" opacity="0.8"/>
<path d="M1038.5 13.9 A6.3 6.6 0 0 1 1051.1 13.9" fill="#8ea0c4" stroke="#f4f7fd" stroke-width="1.5"/>
<ellipse cx="1044.8" cy="16.200000000000003" rx="6.7" ry="6" fill="url(#rd)"/>
<rect x="1041.4" y="12.2" width="6.799999999999999" height="0.7" fill="#ffffff" opacity="0.5"/>
<rect x="1040.8" y="14.1" width="7.999999999999999" height="0.7" fill="#ffffff" opacity="0.5"/>
<rect x="1040.2" y="16.0" width="9.2" height="0.7" fill="#ffffff" opacity="0.5"/>
<rect x="1040.8" y="17.9" width="7.999999999999999" height="0.7" fill="#ffffff" opacity="0.5"/>
<rect x="1041.4" y="19.8" width="6.799999999999999" height="0.7" fill="#ffffff" opacity="0.5"/>
<rect x="1040.8" y="24.0" width="8" height="3" rx="0.8" fill="#6f8ec8"/>
<ellipse cx="1044.8" cy="25.200000000000003" rx="2.6" ry="1" fill="#eef2fb"/>
<ellipse cx="822.5" cy="4.6" rx="3.3" ry="2.4" transform="rotate(-35 822.5 4.6)" fill="#e8b030"/>
<ellipse cx="833" cy="4.6" rx="3.3" ry="2.4" transform="rotate(35 833 4.6)" fill="#e8b030"/>
<polygon points="821,16.8 823.5,12 826,15" fill="#d00000"/><polygon points="834.5,16.8 832,12 829.5,15" fill="#d00000"/>
<circle cx="827.9" cy="10.5" r="7" fill="#d40000"/><circle cx="827.9" cy="10.5" r="5.3" fill="#fbfbfb"/>
<path d="M827.8 6.5 V10.6 L830.3 11.8" stroke="#222" stroke-width="1" fill="none"/><path d="M827.8 10.6 L825.2 13.5" stroke="#e03030" stroke-width="0.7"/>
<text x="956" y="29" font-family="Liberation Sans, sans-serif" font-weight="bold" font-size="16.5" fill="#fff">1</text>
<g fill="none" stroke-width="1.3"><path d="M29 631.5 H35" stroke="#000"/><path d="M35 631.5 H43 L47.2 610.5 H54" stroke="#ffcc22"/><path d="M54 610.5 H61" stroke="#000"/></g>
<g fill="none" stroke-width="1.3"><path d="M109 632.5 H114.5 M135.5 632.5 H141 M114.5 611.5 H135.5" stroke="#000"/><path d="M114.5 611 V633 M135.5 611 V633 M117 624.5 H133" stroke="#ffcc22"/></g>
<polygon points="115.5,624.5 119,621 119,628" fill="#ffcc22"/><polygon points="134.5,624.5 131,621 131,628" fill="#ffcc22"/>
<text x="187.5" y="617" font-family="Liberation Sans, sans-serif" font-weight="bold" font-size="13.5" fill="#ffff00">A</text>
<text x="191.5" y="633" font-family="Liberation Sans, sans-serif" font-weight="bold" font-size="13.5" fill="#ffff00">B</text>
<path d="M187 618.6 H199.6 V608.5 H207.8 V618.6 H213" fill="none" stroke="#ffcc22" stroke-width="1.3"/>
<path d="M187 633.4 H201.4 V623.5 H209.6 V633.4 H213" fill="none" stroke="#000" stroke-width="1.3"/>
<path d="M213.2 614.3 C216 614.5 217.8 616.5 217.8 619 V623.5 C217.8 625.8 215 627.5 211.5 627.5" fill="none" stroke="#000" stroke-width="1.1"/><polygon points="210.2,627.5 213.2,625 213.2,630" fill="#000"/>
<path d="M29 682.5 H33 L42.3 661.5 H47.3 L57 682.5 H61" fill="none" stroke="#000" stroke-width="1.2"/>
<path d="M30 666.5 H61 M30 677.5 H61" stroke="#ffff00" stroke-width="1.4" stroke-dasharray="2 1" fill="none"/>
<rect x="39" y="664.3" width="4.2" height="4.2" fill="#ffcc22"/><rect x="52.8" y="675.3" width="4.2" height="4.2" fill="#ffcc22"/>
<polygon points="37.8,687.3 40.4,683.8 43,687.3" fill="#fff"/><polygon points="52,687.3 54.6,683.8 57.2,687.3" fill="#fff"/>
<path d="M110 667.5 H113 M110 669.5 H113 M110 671.5 H113 M110 673.5 H113 M110 675.5 H113 M130 671.5 H138" stroke="#000" stroke-width="1"/>
<path d="M114.5 666.6 H125.5 L129.5 669.5 V673.5 L125.5 676.4 H114.5 Z" fill="#ffd030" stroke="#000" stroke-width="1.1"/>
<path d="M115.6 675.5 V667.7 H125 L128 669.8" fill="none" stroke="#fff" stroke-width="1"/>
<path d="M188.5 676.5 H194.5 V658.5 H196.5 V662.8 H199 V660.5 H200.6 V670.5 H202.6 V662 H205.6 V665.5 H207.6 V664 H209.6 V658.5 H212.6 V684.5 H215.6 V676.5 H217.6" fill="none" stroke="#000" stroke-width="1.1"/>
<path d="M190 676.5 V685 H194.2 V676.5" fill="none" stroke="#ffcc22" stroke-width="1.7"/><path d="M189.6 677 V684" stroke="#fff" stroke-width="1"/>
<rect x="187" y="687" width="1" height="1" fill="#ddd"/>
<path d="M30 736.4 H33.5 V710.4 H41.5 V736.4 H60" fill="none" stroke="#3a0008" stroke-width="1.2"/>
<path d="M43.5 736.6 V725.5 H45.6 V736.6" fill="none" stroke="#ffcc00" stroke-width="1.2"/>
<circle cx="53.2" cy="719.2" r="6.4" fill="#f4f4f4" opacity="0.9"/><rect x="49.3" y="724" width="7.8" height="8.4" rx="2" fill="#f4f4f4" opacity="0.9"/>
<circle cx="53.2" cy="719.2" r="5.4" fill="url(#bulb)" stroke="#000" stroke-width="1"/>
<rect x="50.6" y="724" width="5.2" height="7" fill="#f0f020" stroke="#000" stroke-width="0.9"/><path d="M51 726.5 H55.5 M51 728.5 H55.5" stroke="#fff8a0" stroke-width="0.8"/>
<path d="M51.8 718 V721 H54.6 V718" fill="none" stroke="#e8a060" stroke-width="0.8"/>
<text x="115.8" y="715" font-family="Liberation Sans, sans-serif" font-size="9" fill="#9c9c9c">A</text>
<text x="121.6" y="721.5" font-family="Liberation Sans, sans-serif" font-size="8.5" letter-spacing="0.6" fill="#9c9c9c">BBB</text>
<path d="M110 721.5 H113.5 V710.5 H116" fill="none" stroke="#000" stroke-width="1.2"/>
<path d="M116.5 733.5 H119.5 V722.5 H122.5" fill="none" stroke="#000" stroke-width="1.1"/>
<path d="M121.5 733.5 H124.5 V722.5 H127.5" fill="none" stroke="#000" stroke-width="1.1"/>
<path d="M126.5 733.5 H129.5 V722.5 H132.5" fill="none" stroke="#000" stroke-width="1.1"/>
<path d="M132.5 733.5 H135.5 V722.5 H138.5" fill="none" stroke="#000" stroke-width="1.1"/>
<path d="M113.5 722 V736.5 H130" fill="none" stroke="#9c9c9c" stroke-width="1.1"/><polygon points="111,724.5 113.5,721 116,724.5" fill="#9c9c9c"/>
<path d="M117.5 735 L119 733.5 L120.5 735 M119 733.5 V736.5" stroke="#9c9c9c" stroke-width="0.8" fill="none"/>
<path d="M122.5 735 L124 733.5 L125.5 735 M124 733.5 V736.5" stroke="#9c9c9c" stroke-width="0.8" fill="none"/>
<path d="M127.5 735 L129 733.5 L130.5 735 M129 733.5 V736.5" stroke="#9c9c9c" stroke-width="0.8" fill="none"/>
<path d="M134.0 735 L135.5 733.5 L137.0 735 M135.5 733.5 V736.5" stroke="#9c9c9c" stroke-width="0.8" fill="none"/>
<rect x="131" y="736" width="1" height="1" fill="#9c9c9c"/><path d="M133 736.5 H135.5" stroke="#9c9c9c" stroke-width="1"/>
<path d="M187 733.5 H189.5 V712.5 H193.5 V733.5 H196.7 V712.5 H203.6 V733.5 H207" fill="none" stroke="#000" stroke-width="1.3"/>
<path d="M207.4 734 V712.5 H210.5 V733.5 H213.5 V712.5 H216.6 V733.5 H219.2" fill="none" stroke="#ffd000" stroke-width="1.3"/>
<ellipse cx="290.4" cy="614.2" rx="7.6" ry="10.6" transform="rotate(-14 290.4 613.6)" fill="url(#disc)"/><ellipse cx="290.4" cy="614.2" rx="7.2" ry="10.2" transform="rotate(-14 290.4 613.6)" fill="none" stroke="#c4c4c4" stroke-width="0.7"/>
<circle cx="302.6" cy="609.8" r="6.6" fill="#8e8e8e" stroke="#d0d0d0" stroke-width="0.8"/><ellipse cx="300" cy="612" rx="2.6" ry="3" fill="#e8e8e8"/><circle cx="300.3" cy="612" r="1" fill="#8a8078"/>
<circle cx="304.4" cy="623.2" r="9" fill="#f09c10"/><circle cx="303.6" cy="622.4" r="8.6" fill="#f2f200"/><path d="M297 618 A9 9 0 0 1 310 616" stroke="#ffff70" stroke-width="1.5" fill="none" opacity="0.6"/>
<text x="301.8" y="626.6" font-family="Liberation Serif, serif" font-size="11" fill="#403800">1</text>
<rect x="286" y="659" width="26" height="2" fill="#000"/>
<rect x="286" y="670" width="2" height="2" fill="#000"/>
<rect x="290" y="670" width="2" height="2" fill="#000"/>
<rect x="294" y="670" width="2" height="2" fill="#000"/>
<rect x="298" y="670" width="2" height="2" fill="#000"/>
<rect x="302" y="670" width="2" height="2" fill="#000"/>
<rect x="306" y="670" width="2" height="2" fill="#000"/>
<rect x="310" y="670" width="2" height="2" fill="#000"/>
<path d="M283 730.5 H289 M309 730.5 H315" stroke="#000" stroke-width="1.2"/>
<path d="M289.4 731 V709.5 H308.5 V731 M292 719.5 H306" fill="none" stroke="#ffcc22" stroke-width="1.3"/>
<polygon points="290.2,719.5 294,716 294,723" fill="#ffcc22"/><polygon points="307.8,719.5 304,716 304,723" fill="#ffcc22"/>
<polygon points="305,736.3 308.6,731.8 312.2,736.3" fill="#fff"/>
<path d="M710.6 607.8 L699.6 613.8 L710.6 619.8" fill="none" stroke="#fff" stroke-width="3" stroke-linejoin="miter"/>
<path d="M769.4 607.8 L780.4 613.8 L769.4 619.8" fill="none" stroke="#fff" stroke-width="3" stroke-linejoin="miter"/>
<path d="M840 610 H836 V620 H840 M849.5 610 H853.5 V620 H849.5" fill="none" stroke="#fff" stroke-width="2"/>
<rect x="835" y="613.5" width="19.5" height="3" fill="#ffff00"/>
<rect x="828.5" y="614" width="2" height="2" fill="#fff"/><rect x="832" y="614" width="1.5" height="2" fill="#fff"/><rect x="856" y="614" width="1.5" height="2" fill="#fff"/><rect x="859" y="614" width="2" height="2" fill="#fff"/>
<path d="M905.3 611 H909 V621 H905.3 M924 611 H920 V621 H924" fill="none" stroke="#fff" stroke-width="2"/>
<rect x="898" y="614.5" width="12" height="3" fill="#ffff00"/><rect x="919" y="614.5" width="11.5" height="3" fill="#ffff00"/>
<rect x="912" y="615" width="1.5" height="2" fill="#fff"/><rect x="915" y="615" width="1.5" height="2" fill="#fff"/>
<rect x="1070.0" y="594" width="1" height="40" fill="#8e8e8e" shape-rendering="crispEdges"/>
<rect x="1083.0" y="594" width="1" height="40" fill="#8e8e8e" shape-rendering="crispEdges"/>
<rect x="1096.0" y="594" width="1" height="40" fill="#8e8e8e" shape-rendering="crispEdges"/>
<path d="M1070.5 601.5 H1096.5 M1074.5 598.3 L1071.1 601.5 L1074.5 604.7 M1079.5 598.3 L1082.9 601.5 L1079.5 604.7 M1092.5 598.3 L1095.9 601.5 L1092.5 604.7" fill="none" stroke="#9a9a9a" stroke-width="1.25"/>
<rect x="1120.0" y="594" width="1" height="40" fill="#8e8e8e" shape-rendering="crispEdges"/>
<rect x="1133.0" y="594" width="1" height="40" fill="#8e8e8e" shape-rendering="crispEdges"/>
<rect x="1146.0" y="594" width="1" height="40" fill="#8e8e8e" shape-rendering="crispEdges"/>
<path d="M1120.5 601.5 H1146.5 M1124.5 598.3 L1121.1 601.5 L1124.5 604.7 M1129.5 598.3 L1132.9 601.5 L1129.5 604.7 M1142.5 598.3 L1145.9 601.5 L1142.5 604.7" fill="none" stroke="#9a9a9a" stroke-width="1.25"/>
<rect x="1170.0" y="594" width="1" height="40" fill="#8e8e8e" shape-rendering="crispEdges"/>
<rect x="1183.0" y="594" width="1" height="40" fill="#8e8e8e" shape-rendering="crispEdges"/>
<rect x="1196.0" y="594" width="1" height="40" fill="#8e8e8e" shape-rendering="crispEdges"/>
<path d="M1170.5 601.5 H1196.5 M1174.5 598.3 L1171.1 601.5 L1174.5 604.7 M1179.5 598.3 L1182.9 601.5 L1179.5 604.7 M1192.5 598.3 L1195.9 601.5 L1192.5 604.7" fill="none" stroke="#9a9a9a" stroke-width="1.25"/>
<g fill="none" stroke="#fff" stroke-width="1" shape-rendering="crispEdges"><path d="M1063 629.5 H1070.5 V614.5 H1077.5 V629.5 H1106"/><path d="M1113 629.5 H1120.5 V614.5 H1140.5 V629.5 H1156"/><path d="M1163 629.5 H1170.5 V614.5 H1202.5 V629.5 H1206"/></g>
<rect x="1077.0" y="608" width="1" height="27" fill="#e8e800"/><rect x="1076.0" y="614" width="3" height="16" fill="#ffff00"/>
<polygon points="1073.9,640 1077.5,634 1081.1,640" fill="#ffff00"/>
<rect x="1202.0" y="608" width="1" height="27" fill="#e8e800"/><rect x="1201.0" y="614" width="3" height="16" fill="#ffff00"/>
<polygon points="1198.9,640 1202.5,634 1206.1,640" fill="#ffff00"/>
</svg>
<div class="a" style="left:10px;top:749px;font-size:16px;line-height:18px;color:#0000ff;text-decoration:underline;-webkit-text-stroke:0.4px #0000ff;">LeCroy</div>
<div class="a t12 r" style="left:1100px;top:753px;width:1165px;"></div>
<div class="a t12" style="left:1158px;top:753px;letter-spacing:0.15px;">25.02.2009 8:32:35</div>
</body></html>
